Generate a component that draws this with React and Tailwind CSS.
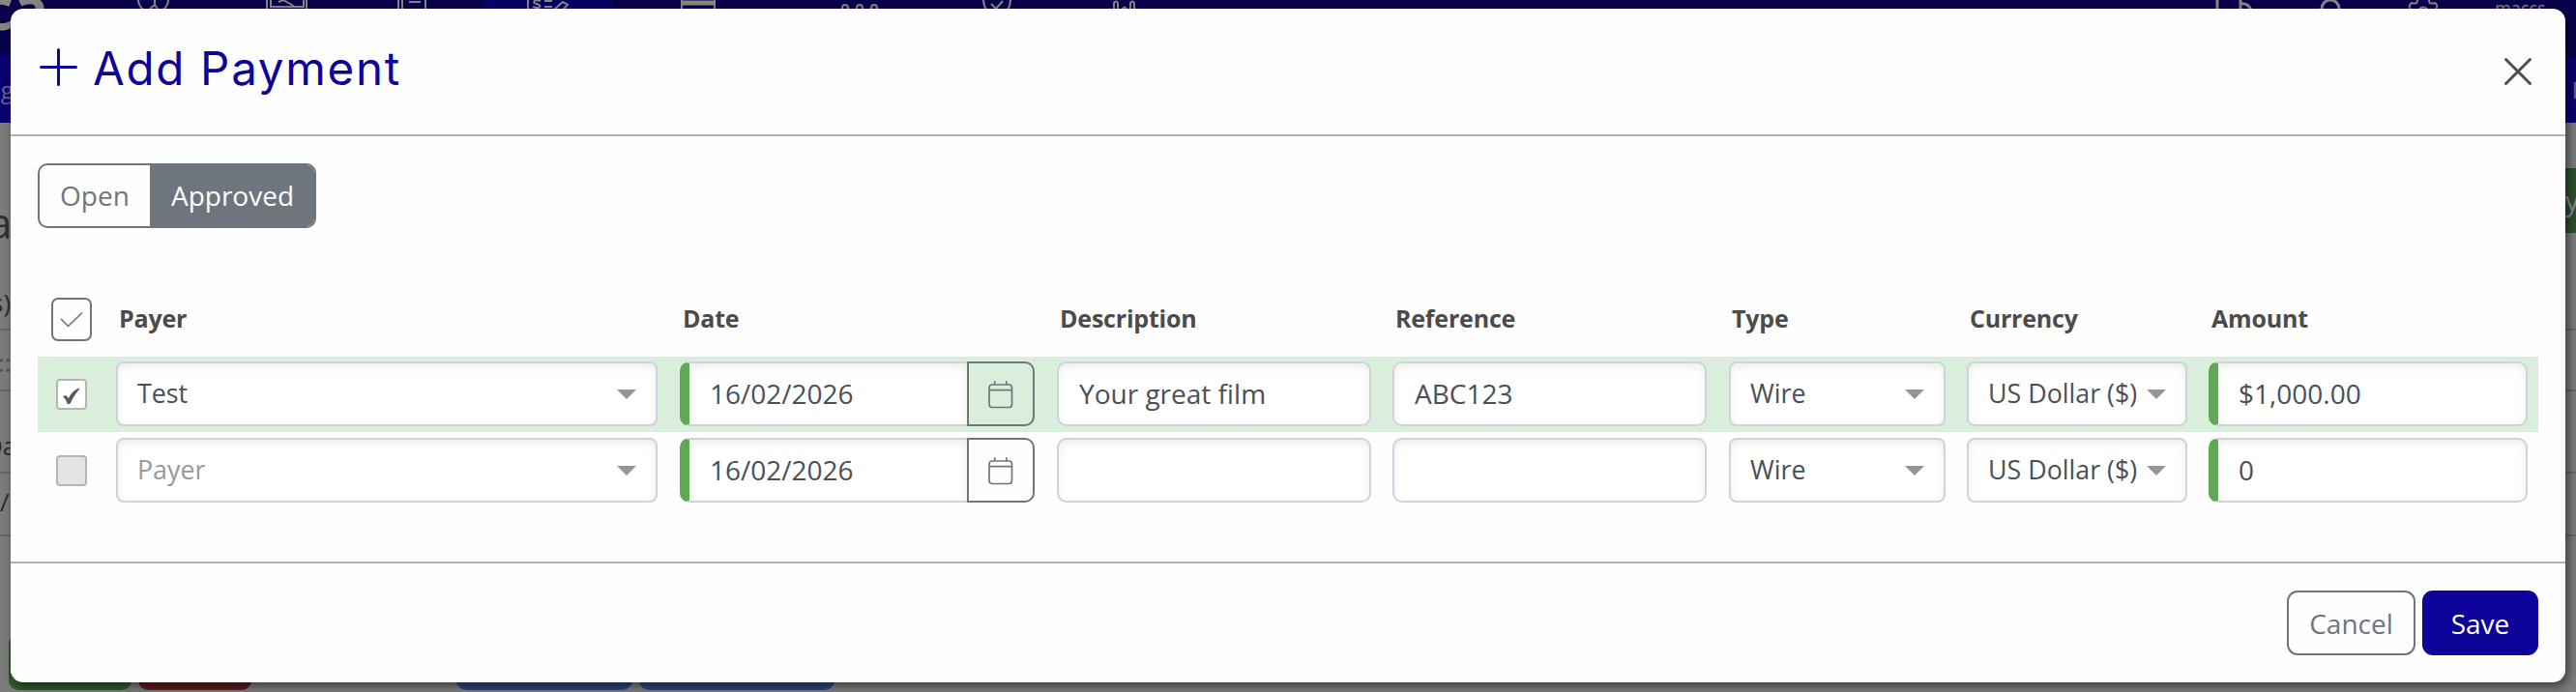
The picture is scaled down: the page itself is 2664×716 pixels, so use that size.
import { useState } from "react";

const rows = [
  { checked: true, payer: "Test", date: "16/02/2026", description: "Your great film", reference: "ABC123", amount: "$1,000.00" },
  { checked: false, payer: "", date: "16/02/2026", description: "", reference: "", amount: "0" },
];

const grid = "grid grid-cols-[81px_583px_390px_347px_348px_246px_250px_341px]";
const box =
  "h-[67px] border-2 border-[#ced2da] bg-white flex items-center text-[#495057] shadow-[inset_0_4px_10px_rgba(0,0,0,0.07)]";

function Select({ value, placeholder, className }) {
  return (
    <div className={`${box} ${className} rounded-[8px] justify-between pl-5 pr-5 text-[26.8px] whitespace-nowrap`}>
      <span className={value ? "" : "text-[#999]"}>{value || placeholder}</span>
      <svg width="20" height="10" viewBox="0 0 20 10" className="shrink-0">
        <path d="M0 0h20L10 10z" fill="#939596" />
      </svg>
    </div>
  );
}

function TextInput({ value, className }) {
  return (
    <input
      type="text"
      defaultValue={value}
      className={`${box} ${className} pb-px pl-[21px] pr-5 text-[28px] outline-none`}
    />
  );
}

function CalendarIcon() {
  return (
    <svg width="26" height="30" viewBox="0 0 26 30" fill="none" stroke="#6e757d" strokeWidth="1.7">
      <rect x="1" y="5" width="23.5" height="23.5" rx="3" />
      <path d="M1 10.7h23.5M6.7 1.2V5M18.8 1.2V5" />
    </svg>
  );
}

function Checkbox({ checked }) {
  return (
    <span
      className={`ml-[19px] flex size-8 items-center justify-center rounded-[4px] border-2 border-[#b4b6b5] ${
        checked ? "bg-white" : "bg-[#e2e4e6]"
      }`}
    >
      {checked && (
        <svg width="20" height="18" viewBox="0 0 20 18" className="mt-[4px]">
          <path d="M1 9.500C2.400 8 4.200 7.800 5.200 9L6.800 11.200C9.500 6 13.500 1.500 19 0.600C14.800 5.600 11.400 10.500 8.800 16.300C7.800 17.600 6.200 17.600 5.500 16.300C4.500 13.600 3.300 11 1 9.500Z" fill="#58595a" />
        </svg>
      )}
    </span>
  );
}

function PaymentRow({ row, className }) {
  return (
    <div className={`${grid} h-[78px] ${className}`}>
      <div className="pt-[18px]"><Checkbox checked={row.checked} /></div>
      <div><Select value={row.payer} placeholder="Payer" className="w-[560px]" /></div>
      <div className="flex">
        <TextInput value={row.date} className="w-[297px] rounded-l-[10px] border-l-[10px] border-l-[#60a854] border-r-0" />
        <button className="flex h-[67px] w-[70px] items-center justify-center rounded-r-[10px] border-2 border-[#6e757d]">
          <CalendarIcon />
        </button>
      </div>
      <div><TextInput value={row.description} className="w-[325px] rounded-[10px]" /></div>
      <div><TextInput value={row.reference} className="w-[325px] rounded-[10px]" /></div>
      <div><Select value="Wire" className="w-[224px]" /></div>
      <div><Select value="US Dollar ($)" className="w-[228px]" /></div>
      <div><TextInput value={row.amount} className="w-[330px] rounded-[10px] border-l-[10px] border-l-[#60a854]" /></div>
    </div>
  );
}

// dimmed application behind the dialog
function Backdrop() {
  return (
    <div className="flex h-[716px] flex-col overflow-hidden bg-[#7b7b7b]">
      <div className="relative h-[58px] shrink-0 bg-[#08004a]">
        <div className="ml-[500px] h-full w-[134px] bg-[#0a0263]" />
        <span className="absolute -left-[17px] -top-[29px] text-[60px] leading-[74px] font-bold text-[#858585]">ca</span>
        <svg width="2664" height="12" className="absolute left-0 top-0" fill="none" stroke="#868686" strokeWidth="2">
          <path d="M143 0c0 4 2 7 5 10M174 0c0 4-2 7-5 10M160 0v5l-5 4M160 5l3 4" />
          <path d="M276 0v9M280 0v7h34V0M317 0v9M288 2l5-2 12 7" />
          <path d="M412 0v9M416 0v9M440 0v9M423 2h12" />
          <path d="M546 0v9M559 1c-7-2-9 2-4 3s5 6-4 3M563 1h8M563 7h8M574 9l8-7 5 3-4 4" />
          <path d="M705 0v9M739 0v9" />
          <path d="M705 3h34" strokeWidth="5" />
          <circle cx="874" cy="8" r="3" />
          <circle cx="889" cy="8" r="3" />
          <circle cx="904" cy="8" r="3" />
          <path d="M1017 0c0 4 1 7 3 10M1045 0c0 4-1 7-3 10M1025 4l5 5 7-8" />
          <path d="M1144 12l4-3M1152 12V3q2-3 4 0v9M1161 12V9q2-3 4 0v3M1169 12V3q2-3 4 0v9" />
          <path d="M2293 0v10M2317 0v10M2317 4c6-1 9 2 11 6" strokeWidth="3" />
          <circle cx="2410" cy="9" r="9" strokeWidth="3" />
          <path d="M2500 0c0 4-2 4-6 3q-4 3-1 6M2512 0c0 4 2 4 6 3q4 3 1 6M2502 9q4-3 8 0" />
        </svg>
        <span className="absolute left-[2580px] -top-[4px] text-[18px] leading-[24px] text-[#868686]">maccs</span>
      </div>
      <div className="flex h-[69px] shrink-0 justify-between bg-[#0a0070] pt-[18px] text-[24px] leading-[34px] text-[#66628e]">
        <span className="-ml-[14px]">ng</span>
        <span className="-mr-[10px]">P</span>
      </div>
      <div className="flex h-[213px] shrink-0 justify-between">
        <span className="-ml-[12px] mt-[73px] text-[44px] leading-[60px] text-[#2f2f2f]">a</span>
        <span className="mt-[47px] h-[67px] w-[11px] overflow-hidden bg-[#2c4f2a] text-[28px] leading-[67px] text-[#8a8a8a]">y</span>
      </div>
      <div className="relative shrink-0 text-[26px] text-[#2b2b2b]">
        <div className="h-[65px] border-y-2 border-[#666]" />
        <div className="h-[85px] border-b-2 border-[#666]" />
        <div className="h-[65px] border-b-2 border-[#666]" />
        <span className="absolute -left-[9px] -top-[46px]">s)</span>
        <span className="absolute -left-[2px] top-[16px] text-[#505050]">::</span>
        <span className="absolute -left-[16px] top-[102px]">Da</span>
        <span className="absolute left-0 top-[160px]">/</span>
      </div>
      <div className="mt-auto flex h-[60px] shrink-0 pb-[2px] pl-[9px]">
        <div className="w-[127px] rounded-[10px] bg-[#2f5a2c]" />
        <div className="ml-[7px] w-[117px] rounded-[10px] bg-[#5c1d1f]" />
        <div className="ml-[212px] w-[182px] rounded-[10px] bg-[#2c4678]" />
        <div className="ml-[7px] w-[202px] rounded-[10px] bg-[#2c4678]" />
      </div>
    </div>
  );
}

export default function App() {
  const [tab, setTab] = useState("Approved");

  return (
    <div className="relative h-[716px] w-[2664px] overflow-hidden font-['Open_Sans',sans-serif]">
      <Backdrop />

      <div className="absolute left-[11px] top-[9px] flex h-[697px] w-[2642px] flex-col rounded-[13px] bg-[#fefefe] shadow-[3px_4px_10px_rgba(0,0,0,0.5)]">
        <div className="flex h-[132px] items-start justify-between border-b-2 border-[#b0b0b0] pl-[29px] pr-[34px]">
          <h1 className="flex pt-[40px] text-[#0f0499]">
            <svg width="41" height="41" viewBox="0 0 41 41" stroke="#0f0499" strokeWidth="3" strokeLinecap="round">
              <path d="M2.500 20.500h36M20.500 2.500v36" />
            </svg>
            <span className="-mt-[7px] ml-[15px] font-['Inter',sans-serif] text-[47.5px] leading-[58px] font-normal tracking-[1.700px]">Add Payment</span>
          </h1>
          <button className="mt-[50px]">
            <svg width="30" height="30" viewBox="0 0 30 30" stroke="#4d4d4d" strokeWidth="3" strokeLinecap="round">
              <path d="M2.500 2.500l25 25M27.500 2.500l-25 25" />
            </svg>
          </button>
        </div>

        <div className="h-[440px] px-[28px] pt-[28px]">
          <div className="flex h-[67px] w-[288px] overflow-hidden rounded-[10px] border-2 border-[#6e757d] text-[28px]">
            {["Open", "Approved"].map((name) => (
              <button
                key={name}
                onClick={() => setTab(name)}
                className={`pb-[2px] ${name === "Open" ? "w-[114px]" : "w-[170px] pl-px"} ${
                  tab === name ? "bg-[#6e757d] text-white" : "text-[#6e757d]"
                }`}
              >
                {name}
              </button>
            ))}
          </div>

          <div className={`${grid} mt-[72px] h-[61px] text-[25px] leading-[45px] font-bold tracking-[-0.200px] text-[#4b4b4b]`}>
            <button className="ml-[14px] flex h-[45px] w-[42px] items-center justify-center rounded-[7px] border-2 border-[#6e757d]">
              <svg width="24" height="16" viewBox="0 0 24 16" fill="none" stroke="#6e757d" strokeWidth="1.700" strokeLinecap="round" strokeLinejoin="round">
                <path d="M1.500 7.500l7 7L22.500 1" />
              </svg>
            </button>
            {["Payer", "Date", "Description", "Reference", "Type", "Currency", "Amount"].map((h) => (
              <span key={h} className="-mt-px pl-[3px]">{h}</span>
            ))}
          </div>

          <PaymentRow row={rows[0]} className="bg-[#d9eedb] pt-[5px]" />
          <PaymentRow row={rows[1]} className="pt-[6px]" />
        </div>

        <div className="flex grow justify-end gap-[7px] border-t-2 border-[#b0b0b0] pr-[28px] pt-[28px] text-[28px]">
          <button className="h-[67px] w-[133px] rounded-[11px] border-2 border-[#6e757d] text-[#6e757d]">Cancel</button>
          <button className="h-[67px] w-[120px] rounded-[11px] bg-[#0f0499] text-white">Save</button>
        </div>
      </div>
    </div>
  );
}
